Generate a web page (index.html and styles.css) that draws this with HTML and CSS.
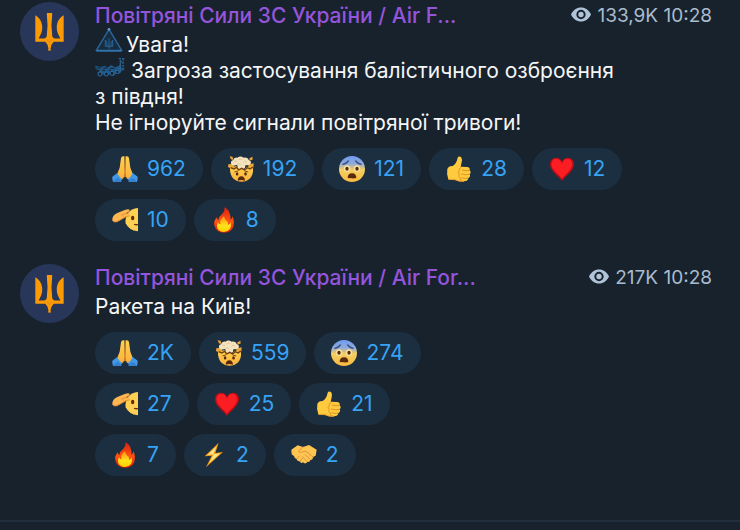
FILE: index.html
```html
<!DOCTYPE html>
<html lang="uk">
<head>
    <meta charset="UTF-8">
    <meta name="viewport" content="width=device-width, initial-scale=1.0">
    <title>Повітряні Сили ЗС України</title>
    <link rel="stylesheet" href="styles.css">
</head>
<body>
    <!-- shared icons -->
    <svg class="sprite" aria-hidden="true">
        <defs>
            <linearGradient id="scaredFill" x1="0" y1="0" x2="0" y2="1">
                <stop offset="0" stop-color="#6f9cf2"/>
                <stop offset="0.3" stop-color="#8fa9dc"/>
                <stop offset="0.52" stop-color="#f3cf63"/>
                <stop offset="1" stop-color="#fbb940"/>
            </linearGradient>
            <linearGradient id="skin" x1="0" y1="0" x2="0" y2="1">
                <stop offset="0" stop-color="#ffd24f"/>
                <stop offset="1" stop-color="#fbb03b"/>
            </linearGradient>
            <linearGradient id="flame" x1="0" y1="0" x2="0" y2="1">
                <stop offset="0" stop-color="#d91f10"/>
                <stop offset="0.55" stop-color="#ff5412"/>
                <stop offset="1" stop-color="#e01908"/>
            </linearGradient>
            <linearGradient id="flameCore" x1="0" y1="0" x2="0" y2="1">
                <stop offset="0" stop-color="#ff8a14"/>
                <stop offset="0.6" stop-color="#ffe21c"/>
                <stop offset="1" stop-color="#ffd000"/>
            </linearGradient>
        </defs>
        <symbol id="trident" viewBox="0 0 88 116">
            <path d="M1 9C14 16 22 30 22 46C22 60 17 68 11 79H28Q37 76 36 66L38 40L36 8V2H52V8L50 40L52 66Q51 76 60 79H77C71 68 66 60 66 46C66 30 74 16 87 9V89H57Q53 94 50 98L47 110L49 116H39L41 110L38 98Q35 94 31 89H1Z" fill="#fb9a05"/>
            <path d="M36 82L44 92L52 82" fill="none" stroke="#d08420" stroke-width="2"/>
        </symbol>
        <symbol id="eye" viewBox="0 0 60 44">
            <path d="M0 22C7 8 17 1 30 1S53 8 60 22C53 36 43 43 30 43S7 36 0 22Z" fill="#b0c4d9"/>
            <circle cx="30" cy="22" r="11" fill="none" stroke="#18222c" stroke-width="6"/>
        </symbol>
        <symbol id="pray" viewBox="0 0 78 78">
            <path d="M1 62L17 50L34 66L24 78H3Q0 70 1 62ZM77 62L61 50L44 66L54 78H75Q78 70 77 62Z" fill="#4298e8"/>
            <path d="M3 78Q7 69 18 65L30 78ZM75 78Q71 69 60 65L48 78Z" fill="#3580cf"/>
            <path d="M37 1Q28 -1 27 7L23 35L17 50Q19 62 31 69Q39 65 39 56ZM41 1Q50 -1 51 7L55 35L61 50Q59 62 47 69Q39 65 39 56Z" fill="url(#skin)"/>
            <path d="M39 2V53Q40 63 32 67M39 53Q38 63 46 67" fill="none" stroke="#c97922" stroke-width="3"/>
        </symbol>
        <symbol id="mindblown" viewBox="0 0 80 80">
            <path d="M6 36Q9 30 16 35L25 31L32 38L42 34L50 40L62 32Q74 32 77 39C79 65 62 79 42 79S5 66 6 36Z" fill="url(#skin)"/>
            <path d="M1 25L17 24L20 34L10 39L0 34ZM62 26L79 22L78 35L64 37ZM5 1L14 2L17 12L9 10ZM65 8L75 2L76 11L68 14Z" fill="#eda737"/>
            <path d="M10 25Q6 15 16 12Q19 4 29 5Q38 -2 48 5Q60 3 64 12Q74 15 69 25Q62 30 54 28L52 37Q42 41 31 37L28 28Q16 32 10 25Z" fill="#f5e3bd"/>
            <path d="M18 18Q24 12 28 18M33 12Q38 6 43 12M47 20Q54 12 58 19M28 27Q34 20 40 27" fill="none" stroke="#d3b786" stroke-width="2"/>
            <path d="M8 36L18 40L26 35L33 43L42 38L51 43L60 36L68 40L76 34" fill="none" stroke="#6f3b13" stroke-width="4"/>
            <path d="M20 49L31 46M51 46L62 49" stroke="#7b4512" stroke-width="3"/>
            <ellipse cx="28" cy="55" rx="4" ry="5" fill="#57280a"/>
            <ellipse cx="54" cy="55" rx="4" ry="5" fill="#57280a"/>
            <path d="M30 76Q30 62 41 62T52 76Q41 71 30 76Z" fill="#57280a"/>
        </symbol>
        <symbol id="scared" viewBox="0 0 78 78">
            <circle cx="39" cy="39" r="39" fill="url(#scaredFill)"/>
            <path d="M12 25Q23 22 28 15M50 15Q55 22 66 25" fill="none" stroke="#35507e" stroke-width="4" stroke-linecap="round"/>
            <ellipse cx="24" cy="38" rx="9" ry="10" fill="#fbe3a0"/>
            <ellipse cx="54" cy="38" rx="9" ry="10" fill="#fbe3a0"/>
            <ellipse cx="24" cy="38" rx="5" ry="6" fill="#57290d"/>
            <ellipse cx="54" cy="38" rx="5" ry="6" fill="#57290d"/>
            <path d="M26 66Q26 52 39 52T52 66Q45 68 39 67T26 66Z" fill="#57290d"/>
        </symbol>
        <symbol id="thumb" viewBox="0 0 78 78">
            <path d="M4 39Q8 29 20 30Q31 24 35 5Q37 0 43 2Q50 5 47 19L44 32L63 33Q73 34 71 43Q77 48 71 55Q75 62 67 66Q66 76 54 76Q38 78 27 71L7 70Q1 55 4 39Z" fill="#ffca3e"/>
            <path d="M71 43Q61 46 48 42M71 55Q60 58 46 54M67 66Q57 69 46 65M47 33Q37 37 40 44Q33 50 40 55Q35 62 43 66Q40 73 50 75" fill="none" stroke="#dc9325" stroke-width="3"/>
            <path d="M7 70L27 71Q38 77 54 76" fill="none" stroke="#ec9f2a" stroke-width="3"/>
        </symbol>
        <symbol id="heart" viewBox="0 0 78 78">
            <path d="M39 75C31 62 3 47 3 25Q4 5 21 5Q34 5 39 17Q44 5 57 5Q74 5 75 25C75 47 47 62 39 75Z" fill="#b80d18"/>
            <path d="M39 69C32 57 8 44 7 25Q8 8 22 8Q34 8 39 23Q44 8 56 8Q69 8 70 25C69 44 46 57 39 69Z" fill="#fa1d22"/>
        </symbol>
        <symbol id="salute" viewBox="0 0 78 78">
            <path d="M78 3Q58 5 48 18Q38 35 41 49Q50 70 78 73Z" fill="#ffd152"/>
            <path d="M1 38Q1 24 16 18L38 9Q52 4 53 10Q52 16 42 19L54 20Q57 27 44 28L19 42Q5 49 1 38Z" fill="#ffb550"/>
            <path d="M42 19L28 25M53 27L42 29L19 42Q5 49 1 38" fill="none" stroke="#e89438" stroke-width="3"/>
            <ellipse cx="62" cy="33" rx="5" ry="7" fill="#5c2c0c"/>
            <path d="M66 52Q72 54 78 53" fill="none" stroke="#6b3510" stroke-width="4"/>
        </symbol>
        <symbol id="fire" viewBox="0 0 78 78">
            <path d="M40 1Q54 7 57 23Q60 30 58 38Q64 34 65 28Q72 48 66 62Q58 77 39 77Q16 77 11 58Q6 44 17 31Q19 38 22 39Q24 27 34 20Q42 12 40 1Z" fill="url(#flame)"/>
            <path d="M39 27Q42 40 50 44Q52 50 51 54Q57 51 59 45Q65 73 39 75Q17 74 18 55Q18 50 21 46Q24 52 28 52Q25 38 39 27Z" fill="url(#flameCore)"/>
        </symbol>
        <symbol id="bolt" viewBox="0 0 78 78">
            <path d="M53 2L11 43L32 41L15 76L66 30L43 33Z" fill="#f99c12"/>
            <path d="M47 12L19 39L38 37L25 63L58 34L37 37Z" fill="#ffe488"/>
        </symbol>
        <symbol id="handshake" viewBox="0 0 78 78">
            <path d="M1 23L20 10L36 15L54 9L77 23L74 41L66 45Q66 54 58 54Q57 61 49 60Q43 68 36 61Q29 66 27 58Q18 59 17 51Q10 49 9 42L2 37Z" fill="#ffc552"/>
            <path d="M36 15L23 27Q25 35 37 28L45 28L66 45M42 38L57 52M34 44L48 58M17 51L24 43M27 58L34 49" fill="none" stroke="#dd9236" stroke-width="3" stroke-linecap="round"/>
        </symbol>
        <symbol id="alert" viewBox="0 0 84 72">
            <path d="M42 4L4 67H80Z" fill="#192d40" stroke="#2868a0" stroke-width="4"/>
            <path d="M4 69H80" stroke="#347ab8" stroke-width="4"/>
            <path d="M31 36V55H53V36M42 31V62M31 36Q38 42 36 54M53 36Q46 42 48 54" fill="none" stroke="#28659b" stroke-width="3"/>
            <circle cx="42" cy="4" r="4" fill="#6295dc"/>
        </symbol>
        <symbol id="launcher" viewBox="0 0 90 66">
            <path d="M1 29L17 33L29 29L38 34L49 27L60 34L72 29L83 37L76 52L62 53L57 60L46 55L34 61L23 55L12 61L7 50L15 44L2 39Z" fill="#205784"/>
            <g fill="#18222c" stroke="#2b6da3" stroke-width="3">
                <circle cx="15" cy="54" r="6"/><circle cx="34" cy="54" r="6"/><circle cx="51" cy="52" r="6"/><circle cx="67" cy="48" r="5"/>
            </g>
            <path d="M5 36H18M25 36H38M46 37H58M22 43H30M42 43H48" fill="none" stroke="#18222c" stroke-width="3"/>
            <path d="M76 48V6M84 44V5M71 8H88M74 18H86M72 29H87M72 38H88" fill="none" stroke="#28618e" stroke-width="4" stroke-dasharray="7 3"/>
        </symbol>
    </svg>

    <main class="feed">
        <article class="message">
            <div class="avatar"><svg><use href="#trident"/></svg></div>
            <div class="content">
                <header class="head">
                    <h2 class="name">Повітряні Сили ЗС України / Air F...</h2>
                    <div class="meta"><svg class="eye"><use href="#eye"/></svg><span>133,9K</span> <time>10:28</time></div>
                </header>
                <div class="text">
                    <p><svg class="alert"><use href="#alert"/></svg>Увага!</p>
                    <p><svg class="launcher"><use href="#launcher"/></svg> Загроза застосування балістичного озброєння<br>з півдня!</p>
                    <p>Не ігноруйте сигнали повітряної тривоги!</p>
                </div>
                <div class="reactions">
                    <button class="reaction"><svg><use href="#pray"/></svg>962</button>
                    <button class="reaction"><svg><use href="#mindblown"/></svg>192</button>
                    <button class="reaction"><svg><use href="#scared"/></svg>121</button>
                    <button class="reaction"><svg><use href="#thumb"/></svg>28</button>
                    <button class="reaction"><svg><use href="#heart"/></svg>12</button>
                    <button class="reaction"><svg><use href="#salute"/></svg>10</button>
                    <button class="reaction"><svg><use href="#fire"/></svg>8</button>
                </div>
            </div>
        </article>

        <article class="message">
            <div class="avatar"><svg><use href="#trident"/></svg></div>
            <div class="content">
                <header class="head">
                    <h2 class="name">Повітряні Сили ЗС України / Air For...</h2>
                    <div class="meta"><svg class="eye"><use href="#eye"/></svg><span>217K</span> <time>10:28</time></div>
                </header>
                <div class="text">
                    <p>Ракета на Київ!</p>
                </div>
                <div class="reactions narrow">
                    <button class="reaction"><svg><use href="#pray"/></svg>2K</button>
                    <button class="reaction"><svg><use href="#mindblown"/></svg>559</button>
                    <button class="reaction"><svg><use href="#scared"/></svg>274</button>
                    <button class="reaction"><svg><use href="#salute"/></svg>27</button>
                    <button class="reaction"><svg><use href="#heart"/></svg>25</button>
                    <button class="reaction"><svg><use href="#thumb"/></svg>21</button>
                    <button class="reaction"><svg><use href="#fire"/></svg>7</button>
                    <button class="reaction"><svg><use href="#bolt"/></svg>2</button>
                    <button class="reaction"><svg><use href="#handshake"/></svg>2</button>
                </div>
            </div>
        </article>
    </main>
</body>
</html>
```
FILE: styles.css
```css
* { box-sizing: border-box; }
body { margin: 0; background: #18222c; color: #f5f6f7; font-family: Inter, "Noto Sans", sans-serif; font-size: 21px; line-height: 26px; }
.sprite { position: absolute; width: 0; height: 0; }

.feed { display: flex; flex-direction: column; gap: 23px; padding: 2px 28px 44px 20px; border-bottom: 2px solid #212f3d; }
.message { display: flex; gap: 16px; align-items: flex-start; }
.avatar { flex: none; width: 59px; height: 59px; border-radius: 50%; background: #283759; display: flex; align-items: center; justify-content: center; }
.avatar svg { width: 29px; height: 39px; }
.content { flex: 1; min-width: 0; padding-top: 1px; }

.head { display: flex; justify-content: space-between; gap: 16px; margin-bottom: 3px; }
.name { margin: 0; font-size: 21px; font-weight: 500; color: #9455dc; white-space: nowrap; overflow: hidden; text-overflow: ellipsis; }
.meta { flex: none; font-size: 19px; color: #a9bccf; white-space: nowrap; }
.eye { width: 20px; height: 15px; margin-right: 6px; }

.text p { margin: 0; }
.text svg { display: inline-block; vertical-align: baseline; }
.alert { width: 28px; height: 24px; margin: -6px 3px 0 0; }
.launcher { width: 30px; height: 22px; margin-top: -6px; }

.reactions { display: flex; flex-wrap: wrap; gap: 9px 8px; margin-top: 12px; }
.narrow { max-width: 340px; }
.reaction { display: flex; align-items: center; gap: 9px; height: 42px; padding: 0 17px; border: 0; border-radius: 21px; background: #1c2f40; color: #36a3f5; font: inherit; cursor: pointer; }
.reaction svg { width: 26px; height: 26px; }
```
